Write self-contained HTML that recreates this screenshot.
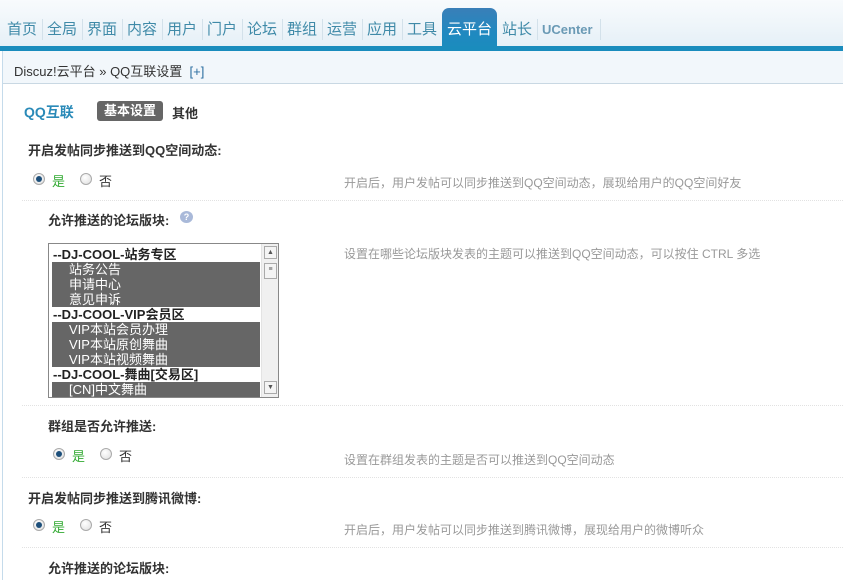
<!DOCTYPE html>
<html><head><meta charset="utf-8">
<style>
*{margin:0;padding:0;box-sizing:border-box}
body{width:843px;height:580px;overflow:hidden;background:#fff;font-family:"Liberation Sans","Noto Sans CJK SC",sans-serif;font-size:12px;color:#333;position:relative}
.a{position:absolute;white-space:nowrap}
#hd{position:absolute;left:0;top:0;width:843px;height:46px;background:linear-gradient(#f8fbfd,#e6f0f7)}
#bar{position:absolute;left:0;top:46px;width:843px;height:5px;background:#1a8cbd}
#crumb{position:absolute;left:3px;top:51px;width:840px;height:33px;background:#f2f7fb;border-bottom:1px solid #c9d8e3}
#lb{position:absolute;left:0;top:51px;width:3px;height:529px;background:#fff;border-right:1px solid #c5dbeb}
.nav{position:absolute;top:19px;font-size:15px;color:#3f8aa8;height:22px;line-height:22px}
.sep{position:absolute;top:19px;width:1px;height:21px;background:#d3e1ea}
#act{position:absolute;left:442px;top:8px;width:55px;height:43px;border-radius:7px 7px 0 0;background:linear-gradient(#3a7fb8,#1f89c0 60%,#1a8cbd)}
.t{font-weight:bold;font-size:13px;color:#333}
.tip{color:#999;font-size:12px}
.dot{position:absolute;left:22px;width:821px;border-top:1px dotted #e2e2e2;height:0}
.r{position:absolute;width:12px;height:12px;border-radius:50%;border:1px solid #aaa;background:radial-gradient(circle at 40% 35%,#fff,#ddd)}
.r.on::after{content:"";position:absolute;left:2px;top:2px;width:6px;height:6px;border-radius:50%;background:#1d4f7a}
.g{color:#33aa33}
#sel{position:absolute;left:48px;top:243px;width:231px;height:155px;border:1px solid #888;background:#fff;overflow:hidden}
.o{position:absolute;left:3px;width:208px;height:15px;line-height:15px;font-size:13px;color:#fff;background:#666;padding-left:17px}
.h{position:absolute;left:3px;width:208px;height:15px;line-height:15px;font-size:13px;font-weight:bold;color:#222;padding-left:1px}
#sb{position:absolute;right:0;top:0;width:17px;height:153px;background:#f0f0f0;border-left:1px solid #e3e3e3}
.sbb{position:absolute;left:2px;width:13px;height:13px;border:1px solid #aaa;background:#f4f4f4;font-size:7px;text-align:center;line-height:11px;color:#555}
</style></head><body>
<div id="hd"></div>
<div id="act"></div>
<div id="bar"></div>
<div class="nav" style="left:7px">首页</div><div class="sep" style="left:42px"></div>
<div class="nav" style="left:47px">全局</div><div class="sep" style="left:82px"></div>
<div class="nav" style="left:87px">界面</div><div class="sep" style="left:122px"></div>
<div class="nav" style="left:127px">内容</div><div class="sep" style="left:162px"></div>
<div class="nav" style="left:167px">用户</div><div class="sep" style="left:202px"></div>
<div class="nav" style="left:207px">门户</div><div class="sep" style="left:242px"></div>
<div class="nav" style="left:247px">论坛</div><div class="sep" style="left:282px"></div>
<div class="nav" style="left:287px">群组</div><div class="sep" style="left:322px"></div>
<div class="nav" style="left:327px">运营</div><div class="sep" style="left:362px"></div>
<div class="nav" style="left:367px">应用</div><div class="sep" style="left:402px"></div>
<div class="nav" style="left:407px">工具</div>
<div class="nav" style="left:447px;color:#fff">云平台</div>
<div class="nav" style="left:502px">站长</div><div class="sep" style="left:537px"></div>
<div class="nav" style="left:542px;font-size:13px;font-weight:bold;color:#6a9ab5">UCenter</div><div class="sep" style="left:600px"></div>
<div id="crumb"></div>
<div id="lb"></div>
<div class="a" style="left:14px;top:61px;font-size:13px;color:#333">Discuz!云平台 » QQ互联设置 <span style="color:#2b6ea0">&nbsp;[+]</span></div>
<div class="a" style="left:24px;top:102px;font-size:14px;font-weight:bold;color:#2a8ab8">QQ互联</div>
<div class="a" style="left:97px;top:101px;width:66px;height:20px;background:#666;border-radius:3px;color:#fff;font-weight:bold;font-size:13px;line-height:20px;text-align:center">基本设置</div>
<div class="a t" style="left:172px;top:103px">其他</div>

<div class="a t" style="left:28px;top:140px">开启发帖同步推送到QQ空间动态:</div>
<div class="r on" style="left:33px;top:173px"></div><div class="a g" style="left:52px;top:171px;font-size:13px">是</div>
<div class="r" style="left:80px;top:173px"></div><div class="a" style="left:99px;top:171px;font-size:13px">否</div>
<div class="a tip" style="left:344px;top:174px">开启后，用户发帖可以同步推送到QQ空间动态，展现给用户的QQ空间好友</div>
<div class="dot" style="top:200px"></div>

<div class="a t" style="left:48px;top:210px">允许推送的论坛版块:</div>
<div class="a" style="left:180px;top:211px;width:13px;height:12px;border-radius:50%;background:#a9b9d9;color:#fff;font-size:9px;text-align:center;line-height:12px;font-weight:bold">?</div>
<div class="a tip" style="left:344px;top:245px">设置在哪些论坛版块发表的主题可以推送到QQ空间动态，可以按住 CTRL 多选</div>
<div id="sel">
<div class="h" style="top:3px">--DJ-COOL-站务专区</div>
<div class="o" style="top:18px">站务公告</div>
<div class="o" style="top:33px">申请中心</div>
<div class="o" style="top:48px">意见申诉</div>
<div class="h" style="top:63px">--DJ-COOL-VIP会员区</div>
<div class="o" style="top:78px">VIP本站会员办理</div>
<div class="o" style="top:93px">VIP本站原创舞曲</div>
<div class="o" style="top:108px">VIP本站视频舞曲</div>
<div class="h" style="top:123px">--DJ-COOL-舞曲[交易区]</div>
<div class="o" style="top:138px">[CN]中文舞曲</div>
<div id="sb"><div class="sbb" style="top:2px">▲</div><div class="sbb" style="top:19px;height:16px">≡</div><div class="sbb" style="top:137px">▼</div></div>
</div>
<div class="dot" style="top:405px"></div>

<div class="a t" style="left:48px;top:416px">群组是否允许推送:</div>
<div class="r on" style="left:53px;top:448px"></div><div class="a g" style="left:72px;top:446px;font-size:13px">是</div>
<div class="r" style="left:100px;top:448px"></div><div class="a" style="left:119px;top:446px;font-size:13px">否</div>
<div class="a tip" style="left:344px;top:451px">设置在群组发表的主题是否可以推送到QQ空间动态</div>
<div class="dot" style="top:477px"></div>

<div class="a t" style="left:28px;top:488px">开启发帖同步推送到腾讯微博:</div>
<div class="r on" style="left:33px;top:519px"></div><div class="a g" style="left:52px;top:517px;font-size:13px">是</div>
<div class="r" style="left:80px;top:519px"></div><div class="a" style="left:99px;top:517px;font-size:13px">否</div>
<div class="a tip" style="left:344px;top:521px">开启后，用户发帖可以同步推送到腾讯微博，展现给用户的微博听众</div>
<div class="dot" style="top:547px"></div>
<div class="a t" style="left:48px;top:558px">允许推送的论坛版块:</div>
</body></html>
